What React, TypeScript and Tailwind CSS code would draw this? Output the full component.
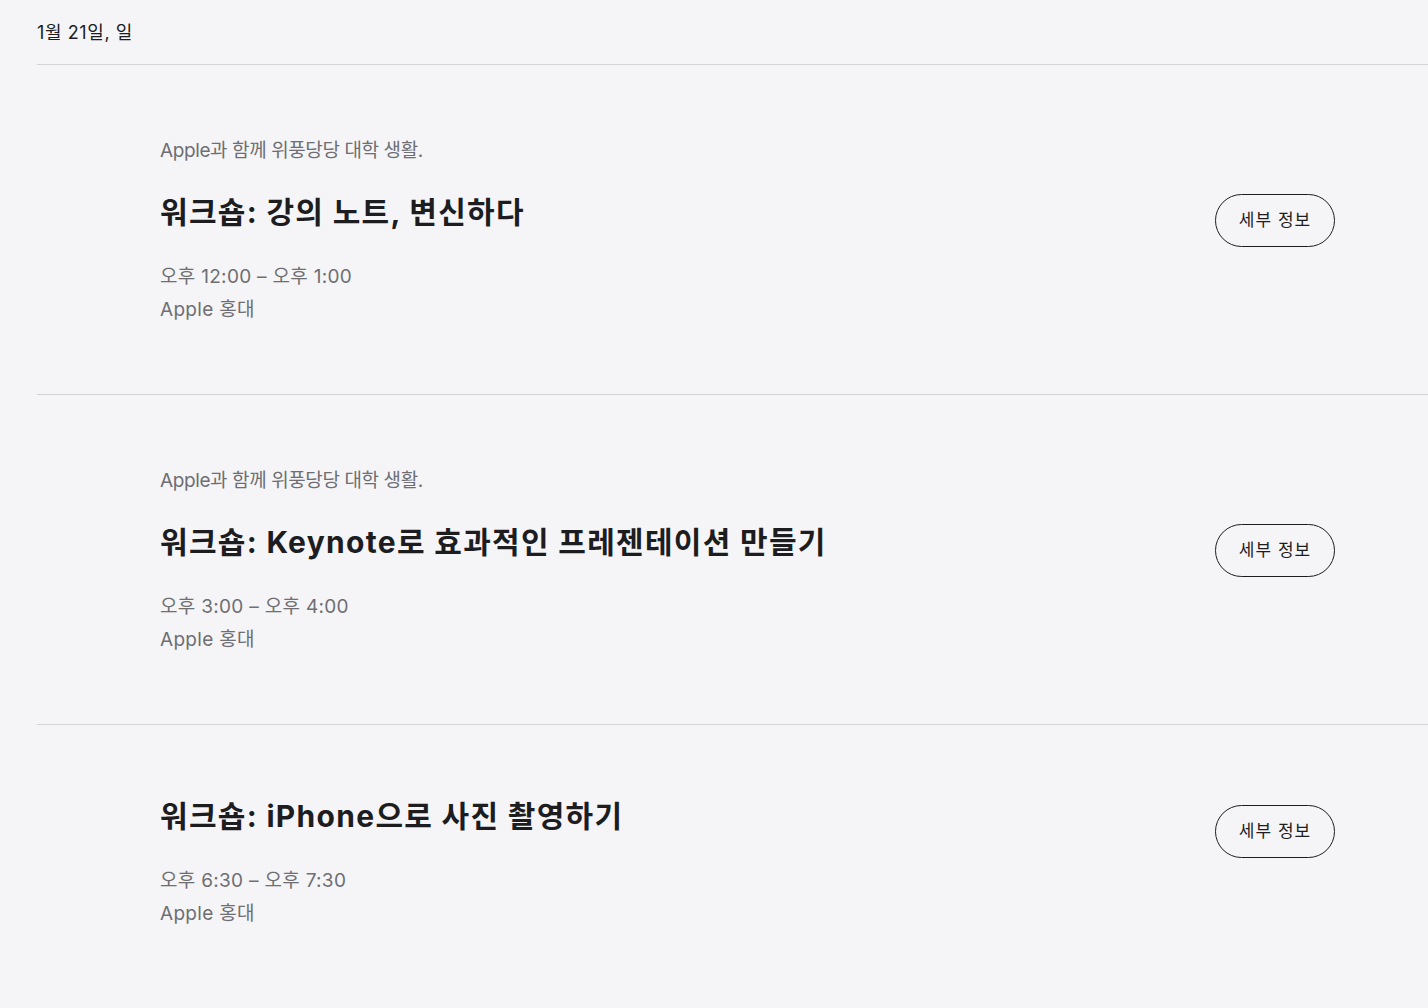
import React from "react";

type Item = {
  eyebrow?: string;
  title: string;
  time: string;
  place: string;
};

const items: Item[] = [
  {
    eyebrow: "Apple과 함께 위풍당당 대학 생활.",
    title: "워크숍: 강의 노트, 변신하다",
    time: "오후 12:00 – 오후 1:00",
    place: "Apple 홍대",
  },
  {
    eyebrow: "Apple과 함께 위풍당당 대학 생활.",
    title: "워크숍: Keynote로 효과적인 프레젠테이션 만들기",
    time: "오후 3:00 – 오후 4:00",
    place: "Apple 홍대",
  },
  {
    title: "워크숍: iPhone으로 사진 촬영하기",
    time: "오후 6:30 – 오후 7:30",
    place: "Apple 홍대",
  },
];

const font = { fontFamily: '"Inter", "Noto Sans CJK KR", sans-serif' };

export default function App() {
  return (
    <div className="min-h-[1008px] w-full bg-[#f5f5f7] text-[#1d1d1f]" style={font}>
      <div className="pl-[37px]">
        <div className="flex h-[65px] items-center border-b border-[#d2d2d7] text-[18px] tracking-[0.6px] text-[#1d1d1f]">
          1월 21일, 일
        </div>
        {items.map((it, i) => (
          <div
            key={i}
            className="flex min-h-[329px] items-start justify-between border-b border-[#d2d2d7] pb-[72px] pl-[123px] pr-[93px] pt-[73px]"
          >
            <div className="flex flex-col">
              {it.eyebrow && (
                <div className="mb-[31px] text-[19px] leading-[25px] tracking-[-0.4px] text-[#6e6e73]">
                  {it.eyebrow}
                </div>
              )}
              <div className="text-[30px] font-bold leading-[37px] tracking-[1.3px] text-[#1d1d1f]">
                {it.title}
              </div>
              <div className="mt-[33px] text-[19px] leading-[25px] tracking-[0.3px] text-[#6e6e73]">
                {it.time}
              </div>
              <div className="mt-[8px] text-[19px] leading-[25px] tracking-[0.3px] text-[#6e6e73]">
                {it.place}
              </div>
            </div>
            <button
              className={`flex h-[53px] w-[120px] shrink-0 items-center justify-center rounded-full border border-[#1d1d1f] text-[17px] tracking-[1px] text-[#1d1d1f] ${
                it.eyebrow ? "mt-[56px]" : "mt-[7px]"
              }`}
            >
              세부 정보
            </button>
          </div>
        ))}
      </div>
    </div>
  );
}
